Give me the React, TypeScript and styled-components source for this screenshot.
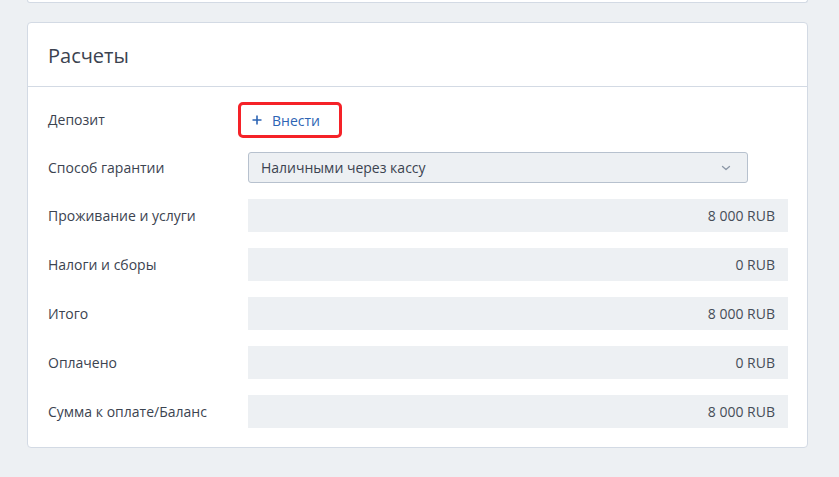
import React from 'react';
import styled, { createGlobalStyle } from 'styled-components';

const GlobalStyle = createGlobalStyle`
  html, body {
    margin: 0;
    padding: 0;
    background: #edf0f3;
    font-family: 'Open Sans', 'Liberation Sans', sans-serif;
  }
`;

type rowItem = {
    label: string
    value: string
}

const amounts: rowItem[] = [
    { label: 'Проживание и услуги', value: '8 000 RUB' },
    { label: 'Налоги и сборы', value: '0 RUB' },
    { label: 'Итого', value: '8 000 RUB' },
    { label: 'Оплачено', value: '0 RUB' },
    { label: 'Сумма к оплате/Баланс', value: '8 000 RUB' },
];

const Chevron = () => (
    <svg width="10" height="6" viewBox="0 0 10 6" fill="none">
        <path d="M1.5 1.5 L5 4.5 L8.5 1.5" stroke="#8d98a7" strokeWidth="1.3" strokeLinecap="round" strokeLinejoin="round" />
    </svg>
);

const PlusIcon = () => (
    <svg width="10" height="10" viewBox="0 0 10 10">
        <path d="M5 0.5 V9.5 M0.5 5 H9.5" stroke="#2d64b4" strokeWidth="1.6" />
    </svg>
);

const App = () => {
    return (
        <Page>
            <GlobalStyle />
            <TopCard />
            <Card>
                <Header>
                    <Title>Расчеты</Title>
                </Header>
                <Body>
                    <Row>
                        <Label>Депозит</Label>
                        <Highlight>
                            <AddButton type='button'>
                                <PlusIcon />
                                <span>Внести</span>
                            </AddButton>
                        </Highlight>
                    </Row>
                    <Row>
                        <Label>Способ гарантии</Label>
                        <Select>
                            <span>Наличными через кассу</span>
                            <Chevron />
                        </Select>
                    </Row>
                    {amounts.map((element) => (
                        <Row key={element.label}>
                            <Label>{element.label}</Label>
                            <Amount>{element.value}</Amount>
                        </Row>
                    ))}
                </Body>
            </Card>
        </Page>
    );
};

const Page = styled.div`
  width: 839px;
  height: 477px;
  padding: 0 31px 0 27px;
  box-sizing: border-box;
  overflow: hidden;
`;

const TopCard = styled.div`
  height: 3px;
  background: #fff;
  border: 1px solid #d3dae4;
  border-top: none;
  border-radius: 0 0 4px 4px;
  box-sizing: border-box;
`;

const Card = styled.div`
  margin-top: 19px;
  background: #fff;
  border: 1px solid #d3dae4;
  border-radius: 4px;
`;

const Header = styled.div`
  height: 64px;
  display: flex;
  align-items: center;
  padding: 1px 20px 0;
  box-sizing: border-box;
  border-bottom: 1px solid #d3dae4;
`;

const Title = styled.h2`
  margin: 0;
  font-size: 20px;
  font-weight: 400;
  color: #3b4350;
`;

const Body = styled.div`
  padding: 15px 19px 19px 20px;
  display: flex;
  flex-direction: column;
  gap: 16px;
`;

const Row = styled.div`
  display: grid;
  grid-template-columns: 200px 1fr;
  align-items: center;
`;

const Label = styled.div`
  font-size: 14px;
  color: #3b4350;
`;

const Highlight = styled.div`
  justify-self: start;
  margin: 0 0 -2px -10px;
  border: 3px solid #f52228;
  border-radius: 5px;
  height: 36px;
  box-sizing: border-box;
  display: flex;
  align-items: center;
`;

const AddButton = styled.button`
  display: flex;
  align-items: center;
  gap: 10px;
  padding: 0 19px 0 11px;
  border: none;
  background: transparent;
  font-family: inherit;
  font-size: 14px;
  color: #2d64b4;
  cursor: pointer;
`;

const Select = styled.div`
  width: 500px;
  height: 31px;
  box-sizing: border-box;
  display: flex;
  align-items: center;
  justify-content: space-between;
  padding: 0 16px 0 12px;
  background: #edf0f3;
  border: 1px solid #b7c1ce;
  border-radius: 3px;
  font-size: 14px;
  color: #3b4350;
`;

const Amount = styled.div`
  height: 33px;
  display: flex;
  align-items: center;
  justify-content: flex-end;
  padding-right: 13px;
  background: #edf0f3;
  font-size: 14px;
  color: #464d58;
`;

export default App;
